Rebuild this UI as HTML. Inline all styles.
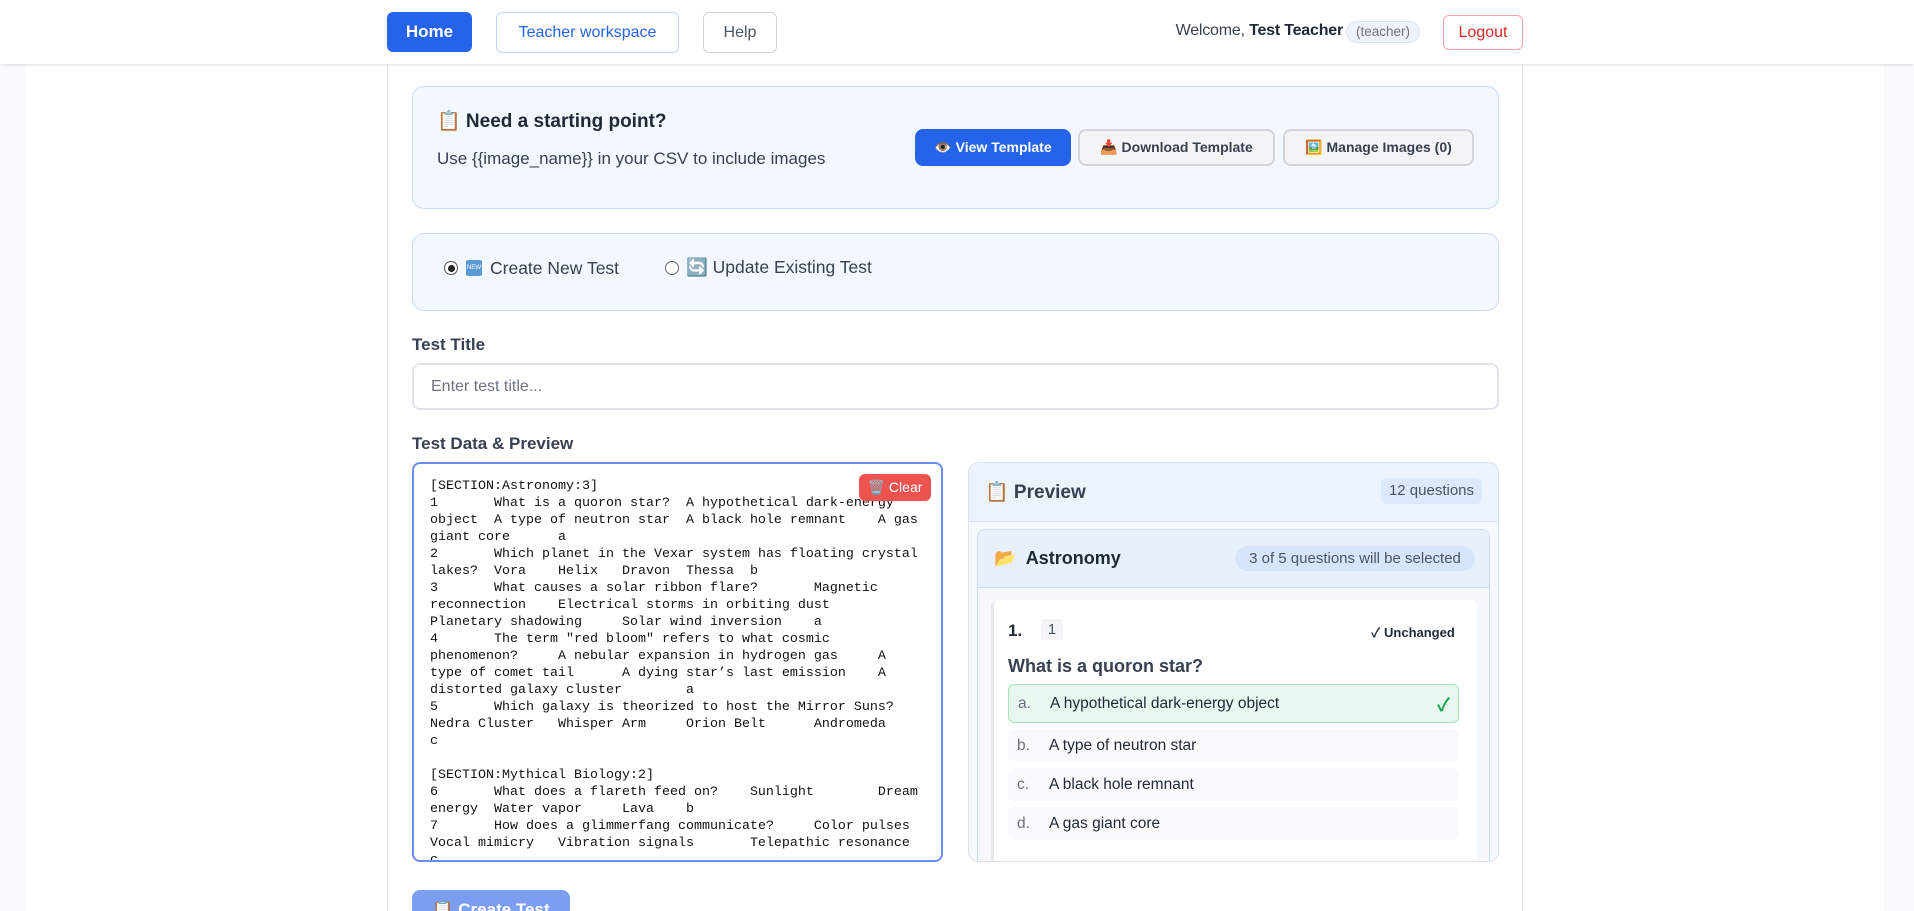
<!DOCTYPE html>
<html style="overflow:hidden;height:911px"><head><meta charset="utf-8"><style>
*{box-sizing:border-box;margin:0;padding:0}
body{width:1914px;height:911px;overflow:hidden;background:#f8fafc;font-family:"Liberation Sans","Noto Sans CJK SC",sans-serif;color:#1f2937;position:relative}
.abs{position:absolute}
.hdr{left:0;top:0;width:1914px;height:64px;background:#fff;box-shadow:0 1px 3px rgba(0,0,0,.12);z-index:5}
.wrap{left:27px;top:64px;width:1857px;height:847px;background:#fff}
.card{left:387px;top:64px;width:1136px;height:847px;border-left:1px solid #e5e7eb;border-right:1px solid #e5e7eb;background:#fff}
.btn{position:absolute;display:flex;align-items:center;justify-content:center;border-radius:6px;font-size:16px}
.box{position:absolute;background:#f3f7fe;border:1px solid #c9dcfb;border-radius:12px}
.tb{position:absolute;display:flex;align-items:center;justify-content:center;border-radius:8px;font-size:14px;font-weight:bold;gap:8px}
.lbl{position:absolute;font-size:17px;font-weight:bold;color:#374151}
pre{font-family:"Liberation Mono",monospace;font-size:13.33px;line-height:17px;tab-size:8;color:#111}
.opt{position:absolute;left:1008px;width:451px;height:33px;background:#f9fafb;border-radius:6px;font-size:15.5px;display:flex;align-items:center;color:#1f2937}
.opt span{width:32px;margin-left:9px;color:#6b7280}
.new{position:absolute;left:466px;top:260px;width:16px;height:16px;background:#5b9bd5;color:#fff;font-size:6px;line-height:16px;text-align:center;border-radius:2px}
</style></head><body>
<div class="abs hdr">
  <div class="btn" style="left:387px;top:12px;width:85px;height:40px;background:#2563eb;color:#fff;font-weight:bold;font-size:17px">Home</div>
  <div class="btn" style="left:496px;top:12px;width:183px;height:41px;border:1px solid #bfd3fb;color:#2563eb">Teacher workspace</div>
  <div class="btn" style="left:703px;top:12px;width:74px;height:41px;border:1px solid #d1d5db;color:#4b5563">Help</div>
  <div class="abs" style="left:1100px;top:22px;width:243px;text-align:right;font-size:16px;color:#374151;letter-spacing:-0.2px">Welcome, <b style="color:#1f2937">Test Teacher</b></div>
  <div class="abs" style="left:1346px;top:21px;width:74px;height:22px;border-radius:11px;background:#eef2fb;border:1px solid #dbe4f5;color:#6b7280;font-size:13.5px;text-align:center;line-height:20px">(teacher)</div>
  <div class="btn" style="left:1443px;top:15px;width:80px;height:35px;border:1px solid #f5a5a5;color:#dc2626">Logout</div>
</div>
<div class="abs wrap"></div>
<div class="abs card"></div>

<div class="box" style="left:412px;top:86px;width:1087px;height:123px"></div>
<div class="abs" style="left:437px;top:109px;font-size:19px;font-weight:bold;color:#1f2937">📋 Need a starting point?</div>
<div class="abs" style="left:437px;top:149px;font-size:17px;color:#374151">Use {{image_name}} in your CSV to include images</div>
<div class="tb" style="left:915px;top:129px;width:156px;height:37px;background:#2563eb;color:#fff">👁️ View Template</div>
<div class="tb" style="left:1078px;top:129px;width:197px;height:37px;background:#f3f4f6;border:2px solid #d1d5db;color:#374151">📥 Download Template</div>
<div class="tb" style="left:1283px;top:129px;width:191px;height:37px;background:#f3f4f6;border:2px solid #d1d5db;color:#374151">🖼️ Manage Images (0)</div>

<div class="box" style="left:412px;top:233px;width:1087px;height:78px"></div>
<div class="abs" style="left:444px;top:261px;width:14px;height:14px;border-radius:50%;border:1px solid #555;background:#fff"><div style="margin:2.5px;width:7px;height:7px;border-radius:50%;background:#222"></div></div>
<div class="new">NEW</div>
<div class="abs" style="left:490px;top:258px;font-size:17.5px;color:#374151">Create New Test</div>
<div class="abs" style="left:665px;top:261px;width:14px;height:14px;border-radius:50%;border:1px solid #666;background:#fff"></div>
<div class="abs" style="left:686px;top:257px;font-size:17.5px;color:#374151">🔄 Update Existing Test</div>

<div class="lbl" style="left:412px;top:335px">Test Title</div>
<div class="abs" style="left:412px;top:363px;width:1087px;height:47px;border:2px solid #e0e4ea;border-radius:8px;background:#fff;font-size:16px;color:#6b7280;padding:13px 0 0 17px">Enter test title...</div>

<div class="lbl" style="left:412px;top:434px">Test Data &amp; Preview</div>
<div class="abs" style="left:412px;top:462px;width:531px;height:400px;border:2px solid #6b8ef0;border-radius:8px;background:#fff;overflow:hidden">
<pre style="position:absolute;left:16px;top:14px">[SECTION:Astronomy:3]
1	What is a quoron star?	A hypothetical dark-energy
object	A type of neutron star	A black hole remnant	A gas
giant core	a
2	Which planet in the Vexar system has floating crystal
lakes?	Vora	Helix	Dravon	Thessa	b
3	What causes a solar ribbon flare?	Magnetic
reconnection	Electrical storms in orbiting dust
Planetary shadowing	Solar wind inversion	a
4	The term "red bloom" refers to what cosmic
phenomenon?	A nebular expansion in hydrogen gas	A
type of comet tail	A dying star’s last emission	A
distorted galaxy cluster	a
5	Which galaxy is theorized to host the Mirror Suns?
Nedra Cluster	Whisper Arm	Orion Belt	Andromeda
c

[SECTION:Mythical Biology:2]
6	What does a flareth feed on?	Sunlight	Dream
energy	Water vapor	Lava	b
7	How does a glimmerfang communicate?	Color pulses
Vocal mimicry	Vibration signals	Telepathic resonance
c</pre>
<div class="btn" style="left:445px;top:10px;width:72px;height:27px;background:#ef5350;color:#fff;font-size:14px">🗑️ Clear</div>
</div>

<div class="abs" style="left:968px;top:462px;width:531px;height:400px;border:1px solid #dbe3ee;border-radius:10px;background:#f5f8fd;overflow:hidden">
  <div class="abs" style="left:0;top:0;width:531px;height:59px;background:#edf3fd;border-bottom:1px solid #dbe3ee"></div>
  <div class="abs" style="left:16px;top:17px;font-size:19px;font-weight:bold;color:#374151">📋 Preview</div>
  <div class="abs" style="left:412px;top:15px;width:101px;height:26px;border-radius:6px;background:#dce8fb;color:#4b5563;font-size:15px;text-align:center;line-height:26px">12 questions</div>
  <div class="abs" style="left:8px;top:66px;width:513px;height:340px;border:1px solid #c9dcfb;border-radius:8px;background:#f5f8fd">
    <div class="abs" style="left:0;top:0;width:511px;height:58px;background:#e8f0fc;border-bottom:1px solid #c9dcfb;border-radius:8px 8px 0 0"></div>
    <div class="abs" style="left:16px;top:18px;font-size:18px;font-weight:bold;color:#1f2937">📂&nbsp; Astronomy</div>
    <div class="abs" style="left:257px;top:16px;width:240px;height:25px;border-radius:13px;background:#d7e5fb;color:#4b5563;font-size:15px;text-align:center;line-height:25px">3 of 5 questions will be selected</div>
    <div class="abs" style="left:13px;top:70px;width:486px;height:270px;background:#fff;border-left:3px solid #e5e7eb;border-radius:6px"></div>
  </div>
  <div class="abs" style="left:39px;top:158px;font-size:17px;font-weight:bold;color:#1f2937">1.</div>
  <div class="abs" style="left:72px;top:156px;width:22px;height:21px;background:#f3f4f6;border-radius:3px;font-size:15px;color:#4b5563;text-align:center;line-height:21px">1</div>
  <div class="abs" style="left:402px;top:159px;font-size:13px;font-weight:bold;color:#1f2937">✓ Unchanged</div>
  <div class="abs" style="left:39px;top:193px;font-size:18px;font-weight:bold;color:#374151">What is a quoron star?</div>
</div>
<div class="opt" style="top:684px;height:39px;background:#e8f8ee;border:1px solid #a7e3bd"><span>a.</span>A hypothetical dark-energy object<b style="margin-left:auto;margin-right:8px;color:#16a34a;font-size:18px">✓</b></div>
<div class="opt" style="top:729px"><span>b.</span>A type of neutron star</div>
<div class="opt" style="top:768px"><span>c.</span>A black hole remnant</div>
<div class="opt" style="top:807px"><span>d.</span>A gas giant core</div>

<div class="abs" style="left:412px;top:890px;width:158px;height:21px;overflow:hidden">
<div class="btn" style="left:0;top:0;width:158px;height:40px;background:#7b9ef0;color:#fff;font-weight:bold;font-size:17px;align-items:flex-start;padding-top:10px;border-radius:8px">📋 Create Test</div>
</div>
</body></html>
